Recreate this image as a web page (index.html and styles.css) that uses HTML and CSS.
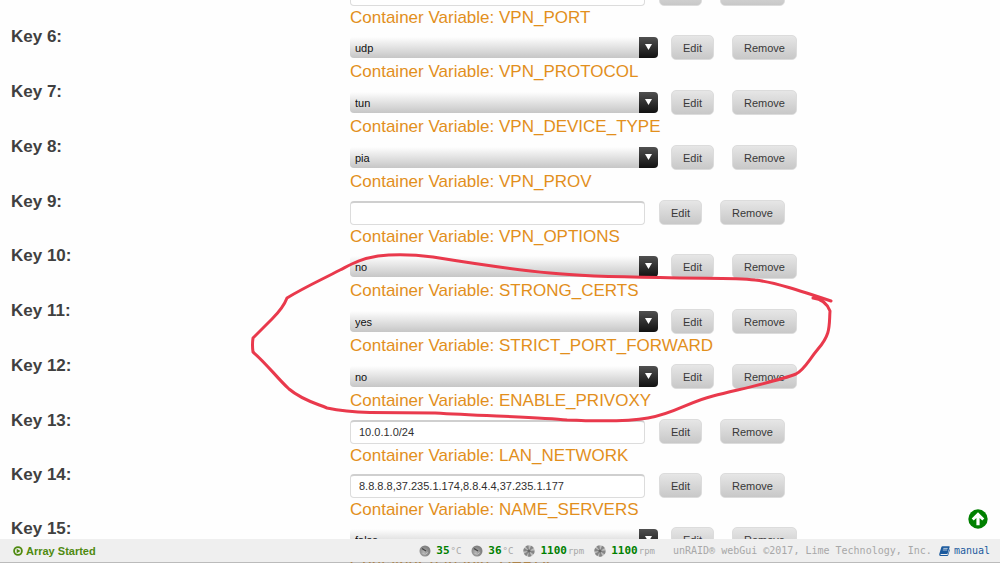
FILE: index.html
```
<!doctype html>
<html lang="en">

<head>
	<meta charset="UTF-8">
	<meta name="viewport" content="width=device-width, initial-scale=1.0">
	<title>unRAID - Update Container</title>
	<link rel="stylesheet" href="styles.css">
</head>

<body>

	<!-- container settings -->
	<form class="settings">
		<div class="row row-text">
			<label class="key" for="key5">Key 5:</label>
			<div class="value">
				<div class="controls">
					<input class="text" id="key5" type="text">
					<button class="btn" type="button">Edit</button>
					<button class="btn" type="button">Remove</button>
				</div>
				<div class="desc">Container Variable: VPN_PORT</div>
			</div>
		</div>
		<div class="row">
			<label class="key" for="key6">Key 6:</label>
			<div class="value">
				<div class="controls">
					<select class="select" id="key6"><option>udp</option><option>tcp</option></select>
					<button class="btn" type="button">Edit</button>
					<button class="btn" type="button">Remove</button>
				</div>
				<div class="desc">Container Variable: VPN_PROTOCOL</div>
			</div>
		</div>
		<div class="row">
			<label class="key" for="key7">Key 7:</label>
			<div class="value">
				<div class="controls">
					<select class="select" id="key7"><option>tun</option><option>tap</option></select>
					<button class="btn" type="button">Edit</button>
					<button class="btn" type="button">Remove</button>
				</div>
				<div class="desc">Container Variable: VPN_DEVICE_TYPE</div>
			</div>
		</div>
		<div class="row">
			<label class="key" for="key8">Key 8:</label>
			<div class="value">
				<div class="controls">
					<select class="select" id="key8"><option>pia</option><option>airvpn</option></select>
					<button class="btn" type="button">Edit</button>
					<button class="btn" type="button">Remove</button>
				</div>
				<div class="desc">Container Variable: VPN_PROV</div>
			</div>
		</div>
		<div class="row row-text">
			<label class="key" for="key9">Key 9:</label>
			<div class="value">
				<div class="controls">
					<input class="text" id="key9" type="text">
					<button class="btn" type="button">Edit</button>
					<button class="btn" type="button">Remove</button>
				</div>
				<div class="desc">Container Variable: VPN_OPTIONS</div>
			</div>
		</div>
		<div class="row">
			<label class="key" for="key10">Key 10:</label>
			<div class="value">
				<div class="controls">
					<select class="select" id="key10"><option>no</option><option>yes</option></select>
					<button class="btn" type="button">Edit</button>
					<button class="btn" type="button">Remove</button>
				</div>
				<div class="desc">Container Variable: STRONG_CERTS</div>
			</div>
		</div>
		<div class="row">
			<label class="key" for="key11">Key 11:</label>
			<div class="value">
				<div class="controls">
					<select class="select" id="key11"><option>yes</option><option>no</option></select>
					<button class="btn" type="button">Edit</button>
					<button class="btn" type="button">Remove</button>
				</div>
				<div class="desc">Container Variable: STRICT_PORT_FORWARD</div>
			</div>
		</div>
		<div class="row">
			<label class="key" for="key12">Key 12:</label>
			<div class="value">
				<div class="controls">
					<select class="select" id="key12"><option>no</option><option>yes</option></select>
					<button class="btn" type="button">Edit</button>
					<button class="btn" type="button">Remove</button>
				</div>
				<div class="desc">Container Variable: ENABLE_PRIVOXY</div>
			</div>
		</div>
		<div class="row row-text">
			<label class="key" for="key13">Key 13:</label>
			<div class="value">
				<div class="controls">
					<input class="text" id="key13" type="text" value="10.0.1.0/24">
					<button class="btn" type="button">Edit</button>
					<button class="btn" type="button">Remove</button>
				</div>
				<div class="desc">Container Variable: LAN_NETWORK</div>
			</div>
		</div>
		<div class="row row-text">
			<label class="key" for="key14">Key 14:</label>
			<div class="value">
				<div class="controls">
					<input class="text" id="key14" type="text" value="8.8.8.8,37.235.1.174,8.8.4.4,37.235.1.177">
					<button class="btn" type="button">Edit</button>
					<button class="btn" type="button">Remove</button>
				</div>
				<div class="desc">Container Variable: NAME_SERVERS</div>
			</div>
		</div>
		<div class="row">
			<label class="key" for="key15">Key 15:</label>
			<div class="value">
				<div class="controls">
					<select class="select" id="key15"><option>false</option><option>true</option></select>
					<button class="btn" type="button">Edit</button>
					<button class="btn" type="button">Remove</button>
				</div>
				<div class="desc">Container Variable: DEBUG</div>
			</div>
		</div>
	</form>

	<!-- hand drawn marker -->
	<svg class="marker" width="1000" height="563" viewBox="0 0 1000 563" aria-hidden="true">
		<path d="M831 301C801 291 774 282 755 280C733 277 700 279 660 277.500C620 277 578 276 550 273C518 270 470 263 433 257C417 255 396 254 378 256C359 259 350 265 340 270C321 280 305 287 287 298C284 306 279 312 272 319L253 338Q252 345 253 352C267 364 277 378 289 389C302 400 315 403 327 408C341 411 351 412 370 412.500L435 413C485 416 540 417 567 420C590 421 625 422 648 418C674 414 688 402 713 396C745 388 778 381 796 374C805 369 808 361 818 349C831 334 829 326 830 311C827 303 821 299 813 298" />
	</svg>

	<a class="to-top" href="#" aria-label="Back to top">
		<svg width="20" height="20" viewBox="0 0 20 20">
			<circle cx="10" cy="10" r="9.700" fill="#008000" />
			<path d="M10 3.300L16.300 9.500L14.300 11.500L11.600 9V16.300H8.400V9L5.700 11.500L3.700 9.500Z" fill="#fff" />
		</svg>
	</a>

	<!-- status bar -->
	<footer class="footer">
		<div class="array">
			<svg width="10" height="10" viewBox="0 0 10 10">
				<circle cx="5" cy="5" r="3.900" fill="none" stroke="#4f8a10" stroke-width="1.800" />
				<path d="M3.700 2.800L7.500 5L3.700 7.200Z" fill="#4f8a10" />
			</svg>
			<span>Array Started</span>
		</div>
		<div class="sensors">
			<span class="sensor">
				<svg width="12" height="12" viewBox="0 0 12 12"><use href="#temp" /></svg>
				<span><b>35</b><small>°C</small></span>
			</span>
			<span class="sensor">
				<svg width="12" height="12" viewBox="0 0 12 12"><use href="#temp" /></svg>
				<span><b>36</b><small>°C</small></span>
			</span>
			<span class="sensor">
				<svg width="12" height="12" viewBox="0 0 12 12"><use href="#fan" /></svg>
				<span><b>1100</b><small>rpm</small></span>
			</span>
			<span class="sensor">
				<svg width="12" height="12" viewBox="0 0 12 12"><use href="#fan" /></svg>
				<span><b>1100</b><small>rpm</small></span>
			</span>
		</div>
		<div class="copyright">unRAID® webGui ©2017, Lime Technology, Inc.</div>
		<a class="manual" href="#">
			<svg width="11" height="10" viewBox="0 0 11 10">
				<path d="M3.500 .3H10.200Q10.900 .4 10.600 1.200L8.600 7.500Q8.400 8.100 7.700 8.100H1.700Q1.200 8.500 1.800 8.900H8.500L10.600 3L11 3.700L9.200 9.300Q9 9.900 8.300 9.900H1.400Q0 9.700 .2 8.200L2.300 1.200Q2.600 .4 3.500 .3Z" fill="#1b5a9e" />
				<path d="M4.300 2.400H8.700M3.800 4H8.200" stroke="#efefef" stroke-width=".7" />
			</svg>
			<span>manual</span>
		</a>
	</footer>

	<!-- sensor icons -->
	<svg class="defs" width="0" height="0" aria-hidden="true">
		<defs>
			<radialGradient id="shade" cx=".4" cy=".6">
				<stop offset="0" stop-color="#b5b5b5" />
				<stop offset="1" stop-color="#828282" />
			</radialGradient>
			<g id="temp">
				<circle cx="6" cy="6" r="5.500" fill="url(#shade)" />
				<path d="M3 3.500L7 6" stroke="#444" stroke-width="1.300" />
				<path d="M3.500 8.500Q6.500 10.500 8.800 7.500" fill="none" stroke="#c4c4c4" />
			</g>
			<g id="fan">
				<circle cx="6" cy="6" r="5.700" fill="#bcbcbc" />
				<path d="M6 6L2.500 1.500Q4 .3 5.500 .5ZM6 6L8 .8Q10 1.500 10.700 3ZM6 6L11.500 5.500Q11.600 8 10.500 9.200ZM6 6L8.500 11Q6.500 12 5 11.500ZM6 6L3.500 11Q1.500 10 1 8.500ZM6 6L.4 6.500Q.2 4.500 1.200 3Z" fill="#858585" />
				<circle cx="6" cy="6" r="1.600" fill="#666" />
			</g>
		</defs>
	</svg>

</body>

</html>
```

FILE: styles.css
```
body {
	margin: 0;
	height: 100vh;
	overflow: hidden;
	position: relative;
	background: #fefefe;
	font-family: "Liberation Sans", Arial, sans-serif;
	font-size: 11px;
	color: #303030;
}

/* list is scrolled part of the way into the first key */
.settings {
	margin-top: -26px;
}

.row {
	display: grid;
	grid-template-columns: 35% 1fr;
	height: 55px;
}

.row-text {
	height: 54px;
}

.key {
	padding-left: 11px;
	font-size: 17px;
	font-weight: 700;
	line-height: 18px;
	color: #404040;
}

.controls {
	display: flex;
	align-items: center;
	height: 25px;
	padding-top: 7px;
}

.desc {
	font-size: 17px;
	line-height: 24px;
	color: #e28f1c;
}

.select {
	appearance: none;
	width: 308px;
	height: 21px;
	margin: 0 13px 0 0;
	padding: 0 24px 0 5px;
	border: 0;
	border-radius: 4px;
	font: 11px "Liberation Sans", Arial, sans-serif;
	color: #101010;
	background:
		url("data:image/svg+xml,%3Csvg xmlns='http://www.w3.org/2000/svg' width='19' height='21'%3E%3Cpath d='M6 7h7l-3.500 6z' fill='white'/%3E%3C/svg%3E") right top no-repeat,
		linear-gradient(#505050, #111) right top / 19px 21px no-repeat,
		linear-gradient(#fefefe, #e2e2e2 50%, #c6c6c6);
}

.text {
	box-sizing: border-box;
	width: 295px;
	height: 24px;
	margin: 0 14px 0 0;
	padding: 0 8px;
	border: 1px solid #dcdcdc;
	border-top: 2px solid #cfcfcf;
	border-radius: 4px;
	background: #fff;
	font: 11px "Liberation Sans", Arial, sans-serif;
	color: #303030;
}

.btn {
	height: 25px;
	margin: 0 18px 0 0;
	padding: 0 11px;
	border: 1px solid #dcdcdc;
	border-radius: 5px;
	background: linear-gradient(#e6e6e6, #c8c8c8);
	font: 11px "Liberation Sans", Arial, sans-serif;
	color: #383838;
}

.marker {
	position: absolute;
	top: 0;
	left: 0;
	pointer-events: none;
}

.marker path {
	fill: none;
	stroke: #e9394c;
	stroke-width: 3;
	stroke-linejoin: round;
	stroke-linecap: round;
}

.to-top {
	position: fixed;
	right: 12px;
	bottom: 34px;
	height: 20px;
}

.footer {
	position: fixed;
	left: 0;
	right: 0;
	bottom: 0;
	display: flex;
	align-items: center;
	box-sizing: border-box;
	height: 24px;
	padding: 0 10px 0 13px;
	border-bottom: 1px solid rgba(120, 120, 120, .5);
	background: #efefef;
	background-clip: padding-box;
	font-family: "DejaVu Sans Mono", monospace;
	font-size: 10px;
	color: #a8a8a8;
}

.array {
	display: flex;
	align-items: center;
	gap: 3px;
	margin-right: auto;
	font-family: "Liberation Sans", Arial, sans-serif;
	font-size: 11px;
	font-weight: 700;
	color: #4f8a10;
}

.sensors {
	display: flex;
	gap: 10px;
	margin-right: 18px;
}

.sensor {
	display: flex;
	align-items: center;
	gap: 5px;
}

.sensor b {
	font-size: 11px;
	color: #008000;
}

.sensor small {
	margin-left: 1px;
	font-size: 9px;
}

.manual {
	display: flex;
	align-items: center;
	gap: 4px;
	margin-left: 7px;
	color: #1b5a9e;
	text-decoration: none;
}

.defs {
	position: absolute;
}
```
